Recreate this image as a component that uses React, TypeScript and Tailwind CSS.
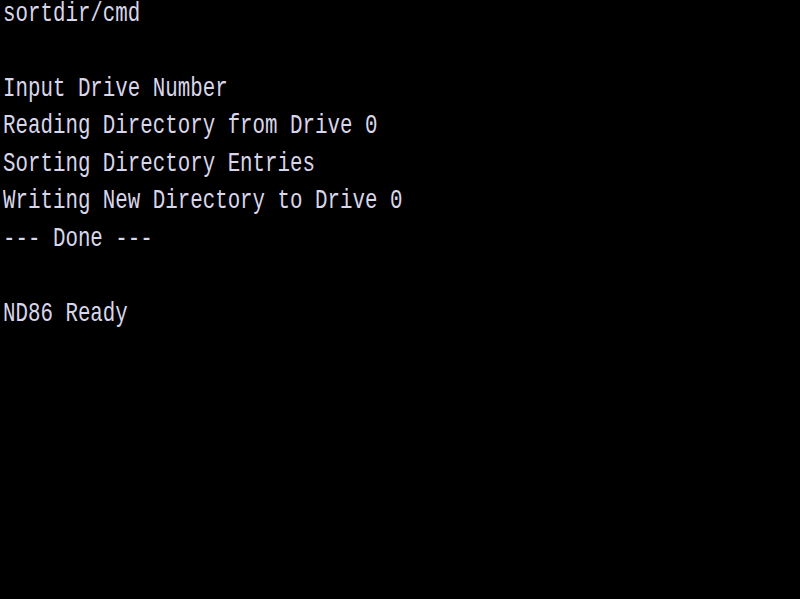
const lines = [
  "sortdir/cmd",
  "",
  "Input Drive Number",
  "Reading Directory from Drive 0",
  "Sorting Directory Entries",
  "Writing New Directory to Drive 0",
  "--- Done ---",
  "",
  "ND86 Ready",
];

export default function App() {
  return (
    <div className="w-[800px] h-[599px] bg-black overflow-hidden pl-[3px] text-[#d8d6ea] font-['Liberation_Mono',monospace] text-[20.8px]">
      {lines.map((line, i) => (
        <div key={i} className="h-[37.44px] leading-[21px] whitespace-pre">
          <div className="origin-top-left scale-y-[1.33]">{line || " "}</div>
        </div>
      ))}
    </div>
  );
}
